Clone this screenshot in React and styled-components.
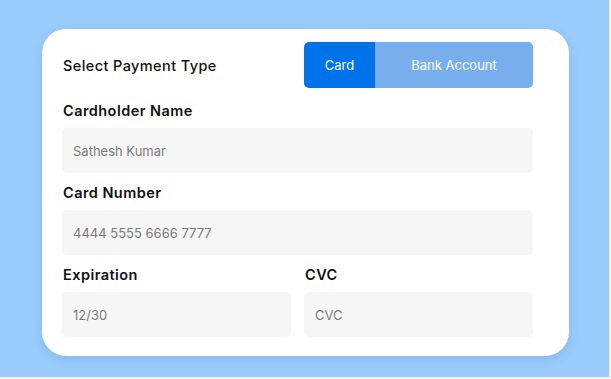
import React, { useState } from "react";
import styled, { createGlobalStyle } from "styled-components";

const GlobalStyle = createGlobalStyle`
	html, body {
		margin: 0;
		padding: 0;
		background: #eef6fe;
	}
	* {
		box-sizing: border-box;
	}
`;

const Page = styled.div`
	width: 609px;
	height: 377px;
	background: #99cbfc;
	padding-top: 29px;
	padding-left: 42px;
	font-family: Inter, "Noto Sans", sans-serif;
`;

const Card = styled.div`
	width: 527px;
	background: #ffffff;
	border-radius: 24px;
	padding: 13px 36px 19px 20px;
	box-shadow: 0 3px 10px rgba(40, 100, 170, 0.18);
	display: flex;
	flex-direction: column;
`;

const Header = styled.div`
	display: flex;
	align-items: center;
	justify-content: space-between;
	height: 46px;
	margin-bottom: 11px;
`;

const Title = styled.div`
	font-size: 14.5px;
	font-weight: 500;
	color: #111;
	letter-spacing: 0.4px;
	padding-left: 1px;
`;

const Toggle = styled.div`
	display: flex;
	width: 229px;
	height: 46px;
	border-radius: 5px;
	overflow: hidden;
`;

const Segment = styled.button`
	border: none;
	margin: 0;
	padding: 0;
	font-family: inherit;
	font-size: 13px;
	color: #fff;
	cursor: pointer;
	width: ${(p) => p.$width}px;
	background: ${(p) => (p.$active ? "#0073eb" : "#78aeec")};
`;

const Fields = styled.div`
	display: flex;
	flex-direction: column;
	gap: 8px;
`;

const Row = styled.div`
	display: grid;
	grid-template-columns: 1fr 1fr;
	column-gap: 13px;
`;

const Field = styled.div`
	display: flex;
	flex-direction: column;
`;

const Label = styled.label`
	font-size: 14.5px;
	font-weight: 600;
	color: #111;
	height: 24px;
	line-height: 24px;
	margin-bottom: 5px;
	letter-spacing: 0.45px;
	padding-left: 1px;
`;

const Input = styled.input`
	height: 45px;
	border: none;
	border-radius: 5px;
	background: #f6f6f6;
	padding: 0 11px;
	font-family: inherit;
	font-size: 13px;
	color: #333;
	outline: none;

	&::placeholder {
		color: #7b7b7b;
	}
`;

export default function App() {
	const [type, setType] = useState("card");
	return (
		<Page>
			<GlobalStyle />
			<Card>
				<Header>
					<Title>Select Payment Type</Title>
					<Toggle>
						<Segment
							$width={71}
							$active={type === "card"}
							onClick={() => setType("card")}
						>
							Card
						</Segment>
						<Segment
							$width={158}
							$active={type === "bank"}
							onClick={() => setType("bank")}
						>
							Bank Account
						</Segment>
					</Toggle>
				</Header>
				<Fields>
					<Field>
						<Label>Cardholder Name</Label>
						<Input placeholder="Sathesh Kumar" />
					</Field>
					<Field>
						<Label>Card Number</Label>
						<Input placeholder="4444 5555 6666 7777" />
					</Field>
					<Row>
						<Field>
							<Label>Expiration</Label>
							<Input placeholder="12/30" />
						</Field>
						<Field>
							<Label>CVC</Label>
							<Input placeholder="CVC" />
						</Field>
					</Row>
				</Fields>
			</Card>
		</Page>
	);
}
